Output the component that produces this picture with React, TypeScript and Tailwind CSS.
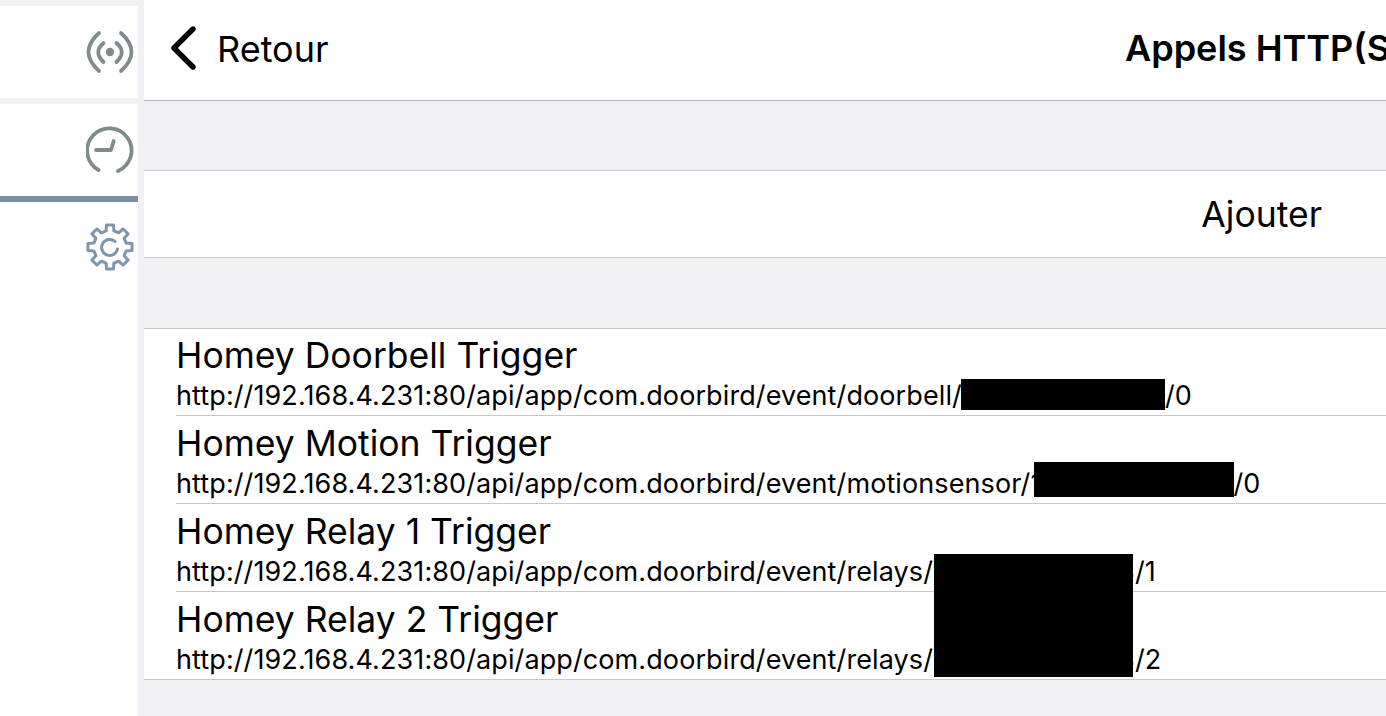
const GEAR = (() => {
  const cx = 24, cy = 24, ro = 22.3, ri = 16.6, n = 8;
  const pts: string[] = [];
  for (let i = 0; i < n; i++) {
    const a = (i * 2 * Math.PI) / n - Math.PI / 2;
    const w = Math.PI / n;
    const p = (r: number, t: number) => `${(cx + r * Math.cos(t)).toFixed(2)} ${(cy + r * Math.sin(t)).toFixed(2)}`;
    pts.push(`${i === 0 ? "M" : "L"}${p(ri, a - w * 0.6)}`);
    pts.push(`L${p(ro, a - w * 0.4)}`);
    pts.push(`L${p(ro, a + w * 0.4)}`);
    pts.push(`L${p(ri, a + w * 0.6)}`);
  }
  return pts.join(" ") + " Z";
})();

const URL_BASE = "http://192.168.4.231:80/api/app/com.doorbird/event/";

function Row({ title, path, lead, gap, tail, first, last }: { title: string; path: string; lead?: string; gap: string; tail: string; first?: boolean; last?: boolean }) {
  const height = first ? "h-[87px]" : "h-[88px]";
  const box = last ? "pl-[32px]" : "ml-[32px]";
  return (
    <div className={`${height} ${box} border-b border-[#c8c7cc]`}>
      <div className={`${first ? "pt-[5px]" : "pt-[6px]"} text-[35.5px] leading-[44px] text-black whitespace-nowrap`}>{title}</div>
      <div className="mt-[2px] text-[27px] tracking-[0.1px] leading-[32px] text-black whitespace-nowrap">
        {URL_BASE}{path}{lead}<span className={`inline-block ${gap}`} />{tail}
      </div>
    </div>
  );
}

export default function App() {
  return (
    <div className="relative w-[1386px] h-[716px] overflow-hidden flex bg-white font-['Inter',sans-serif]">
      <aside className="w-[138px] shrink-0 flex flex-col bg-white">
        <div className="h-[6px] bg-[#f0f0f5]" />
        <div className="h-[92px] flex items-center justify-end pr-[4px]">
          <svg width="48" height="48" viewBox="0 0 48 48" fill="none" stroke="#7f8c8d" strokeWidth="3.8" strokeLinecap="round">
            <path d="M13 5 Q-8 24 13 43" />
            <path d="M35 5 Q56 24 35 43" />
            <path d="M17.5 15 Q7 24 17.5 34" />
            <path d="M30.5 15 Q41 24 30.5 34" />
            <circle cx="24" cy="24" r="4.2" fill="#7f8c8d" stroke="none" />
          </svg>
        </div>
        <div className="h-[6px] bg-[#f0f0f5]" />
        <div className="h-[92px] flex items-center justify-end pr-[4px]">
          <svg width="48" height="48" viewBox="0 0 48 48" fill="none" stroke="#7f8c8d" strokeWidth="3.8" strokeLinecap="round" strokeLinejoin="round">
            <path d="M12.6 44 A22.2 22.2 0 1 1 32 45" />
            <path d="M10 24 H25 L27.7 15" />
          </svg>
        </div>
        <div className="h-[6px] bg-[#7a8ea3]" />
        <div className="h-[92px] flex items-start justify-end pr-[4px] pt-[21px]">
          <svg width="48" height="48" viewBox="0 0 48 48" fill="none" stroke="#7f95aa" strokeWidth="3" strokeLinecap="round" strokeLinejoin="round">
            <path d={GEAR} />
            <path d="M29 18.5 A8 8 0 1 0 31.5 26" />
          </svg>
        </div>
      </aside>
      <div className="w-[6px] shrink-0 bg-[#f0f0f5]" />
      <main className="flex-1 min-w-0 flex flex-col bg-[#f0f0f5]">
        <header className="relative h-[101px] shrink-0 bg-white border-b border-[#b2b2b2] flex items-center">
          <svg className="ml-[25px] mb-[4px]" width="28" height="44" viewBox="0 0 28 44" fill="none" stroke="#000" strokeWidth="5.4" strokeLinecap="round" strokeLinejoin="round">
            <path d="M24 3 L5 22 L24 41" />
          </svg>
          <span className="ml-[20px] mb-[3px] text-[36px] text-black">Retour</span>
          <span className="absolute left-[981px] top-[26px] text-[36px] leading-[44px] font-semibold text-black whitespace-nowrap">Appels HTTP(S)</span>
        </header>
        <div className="h-[69px] shrink-0" />
        <div className="h-[88px] shrink-0 bg-white border-y border-[#c8c7cc] flex items-center justify-end pr-[64px] pt-[2px]">
          <span className="text-[35.5px] text-black">Ajouter</span>
        </div>
        <div className="h-[70px] shrink-0" />
        <div className="shrink-0 bg-white border-t border-[#c8c7cc]">
          <Row first title="Homey Doorbell Trigger" path="doorbell/" gap="w-[203px]" tail="/0" />
          <Row title="Homey Motion Trigger" path="motionsensor/" lead="1" gap="w-[192px]" tail="/0" />
          <Row title="Homey Relay 1 Trigger" path="relays/" lead="1" gap="w-[174px]" tail="8/1" />
          <Row last title="Homey Relay 2 Trigger" path="relays/" lead="1" gap="w-[174px]" tail="8/2" />
        </div>
      </main>
      <div className="absolute left-[961px] top-[379px] w-[204px] h-[31px] bg-black" />
      <div className="absolute left-[1034px] top-[462px] w-[200px] h-[35px] bg-black" />
      <div className="absolute left-[934px] top-[554px] w-[199px] h-[123px] bg-black" />
    </div>
  );
}
